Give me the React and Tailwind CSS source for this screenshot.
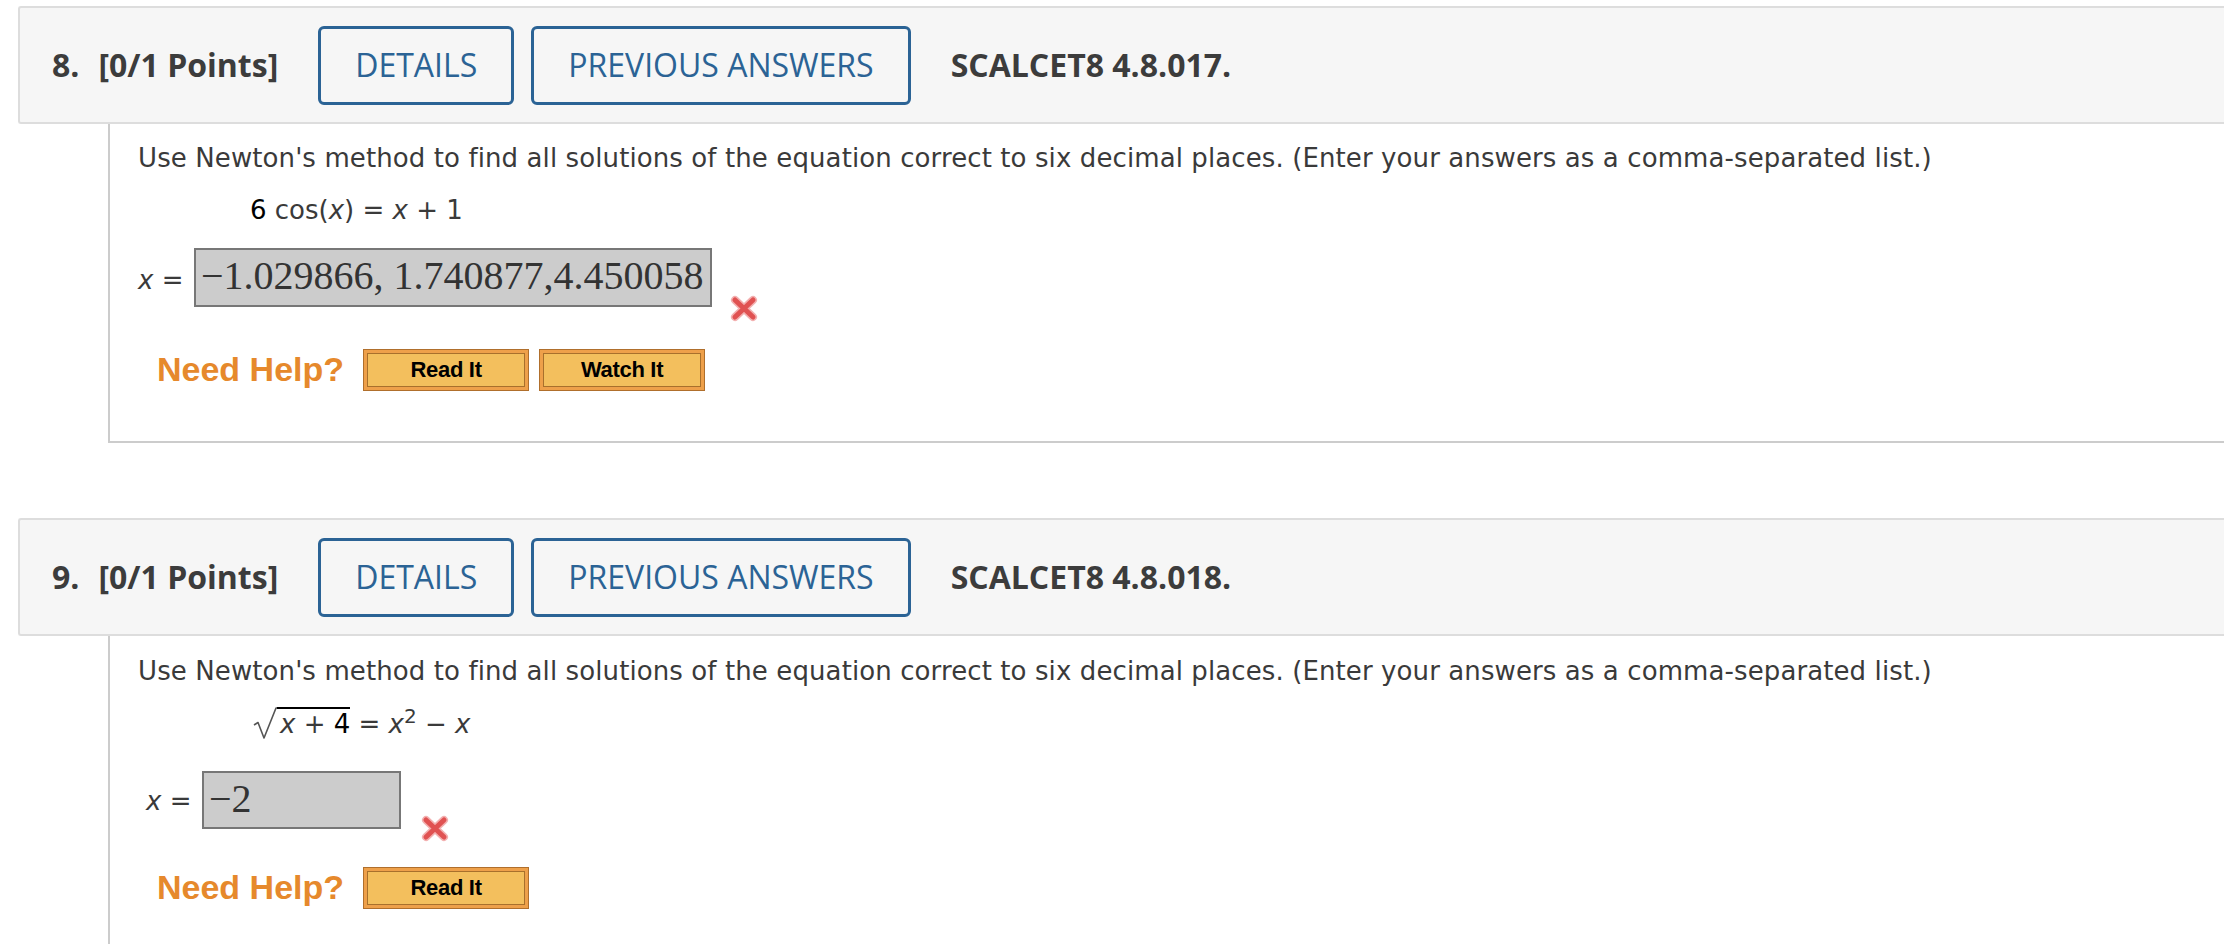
import React from "react";

function RedX({ className }) {
  return (
    <svg width="28" height="27" viewBox="0 0 28 27" className={className}>
      <g strokeLinecap="round">
        <path d="M5 5 L23 22 M23 5 L5 22" stroke="#f3b0b0" strokeWidth="8" fill="none" />
        <path d="M5 5 L23 22 M23 5 L5 22" stroke="#e05252" strokeWidth="5" fill="none" />
      </g>
    </svg>
  );
}

function HelpButton({ label }) {
  return (
    <div className="w-[166px] h-[42px] border border-[#b06f2c] bg-[#eea04a] p-[3px]">
      <div className="h-full border border-[#a8702c] bg-[#f3bf5d] flex items-center justify-center font-['Liberation_Sans',sans-serif] font-bold text-[22px] tracking-[-0.3px] text-black leading-none">
        {label}
      </div>
    </div>
  );
}

function Header({ num, code }) {
  return (
    <div className="h-[118px] bg-[#f6f6f6] border-t-2 border-b-2 border-l-2 border-[#dddddd] rounded-l-[3px] flex items-center pl-[32px] font-['Open_Sans',sans-serif] text-[32px] leading-none whitespace-nowrap">
      <span className="font-bold text-[#3c3c3c]">{num}.</span>
      <span className="font-bold text-[#3c3c3c] ml-[19px]">[0/1 Points]</span>
      <div className="ml-[40px] h-[79px] px-[34px] border-[3px] border-[#2b6395] rounded-[6px] text-[#2b6395] flex items-center">
        DETAILS
      </div>
      <div className="ml-[17px] h-[79px] px-[34px] border-[3px] border-[#2b6395] rounded-[6px] text-[#2b6395] flex items-center">
        PREVIOUS ANSWERS
      </div>
      <span className="ml-[40px] font-bold text-[#3c3c3c]">SCALCET8 4.8.{code}.</span>
    </div>
  );
}

const QUESTION =
  "Use Newton's method to find all solutions of the equation correct to six decimal places. (Enter your answers as a comma-separated list.)";

function NeedHelp({ buttons, mt }) {
  return (
    <div className={`flex items-center ml-[19px] ${mt}`}>
      <span className="font-['Liberation_Sans',sans-serif] font-bold text-[34px] leading-none text-[#e6892c] mb-[3px]">
        Need Help?
      </span>
      <div className="flex gap-[10px] ml-[19px]">
        {buttons.map((b) => (
          <HelpButton key={b} label={b} />
        ))}
      </div>
    </div>
  );
}

export default function App() {
  return (
    <div className="w-[2224px] h-[944px] overflow-hidden bg-white">
      {/* Question 8 */}
      <div className="ml-[18px] pt-[6px]">
        <Header num="8" code="017" />
        <div className="ml-[90px] border-l-2 border-b-2 border-[#cccccc] pl-[28px] pt-[19px] pb-[50px] font-['DejaVu_Sans',sans-serif] text-[26px] leading-[30px] text-[#3a3a3a]">
          <div className="whitespace-nowrap tracking-[0.1px]">{QUESTION}</div>
          <div className="mt-[22px] ml-[112px] whitespace-pre">
            <span className="text-black">6</span> cos(<i>x</i>) = <i>x</i> + 1
          </div>
          <div className="mt-[23px] flex items-start">
            <div className="w-[56px] mt-[17px] whitespace-pre">
              <i>x</i> =
            </div>
            <div className="w-[518px] h-[59px] bg-[#cccccc] border-2 border-[#777777] pl-[5px] pt-[4px] font-['Liberation_Serif',serif] text-[40px] leading-[44px] text-[#333333] whitespace-nowrap">
              −1.029866, 1.740877,4.450058
            </div>
            <RedX className="ml-[18px] mt-[47px]" />
          </div>
          <NeedHelp buttons={["Read It", "Watch It"]} mt="mt-[27px]" />
        </div>
      </div>

      {/* Question 9 */}
      <div className="ml-[18px] mt-[75px]">
        <Header num="9" code="018" />
        <div className="ml-[90px] border-l-2 border-[#cccccc] pl-[28px] pt-[20px] pb-[60px] font-['DejaVu_Sans',sans-serif] text-[26px] leading-[30px] text-[#3a3a3a]">
          <div className="whitespace-nowrap tracking-[0.1px]">{QUESTION}</div>
          <div className="mt-[19px] ml-[115px] flex items-start whitespace-pre">
            <svg width="24" height="34" viewBox="0 0 24 34" className="shrink-0">
              <path d="M1 20 L5 17.5 L11 33 L23 3 L24 3" stroke="#555555" strokeWidth="1.6" fill="none" strokeLinejoin="round" />
            </svg>
            <span className="mt-[2px] border-t-2 border-black pl-[3px]">
              <i>x</i> + <span className="text-black">4</span>
            </span>
            <span className="mt-[4px]">
              {" "}= <i>x</i>
              <sup className="text-[20px]">2</sup> − <i>x</i>
            </span>
          </div>
          <div className="mt-[32px] flex items-start">
            <div className="w-[64px] pl-[8px] mt-[15px] whitespace-pre">
              <i>x</i> =
            </div>
            <div className="w-[199px] h-[58px] bg-[#cccccc] border-2 border-[#777777] pl-[5px] pt-[4px] font-['Liberation_Serif',serif] text-[40px] leading-[44px] text-[#333333] whitespace-nowrap">
              −2
            </div>
            <RedX className="ml-[20px] mt-[44px]" />
          </div>
          <NeedHelp buttons={["Read It"]} mt="mt-[25px]" />
        </div>
      </div>
    </div>
  );
}
